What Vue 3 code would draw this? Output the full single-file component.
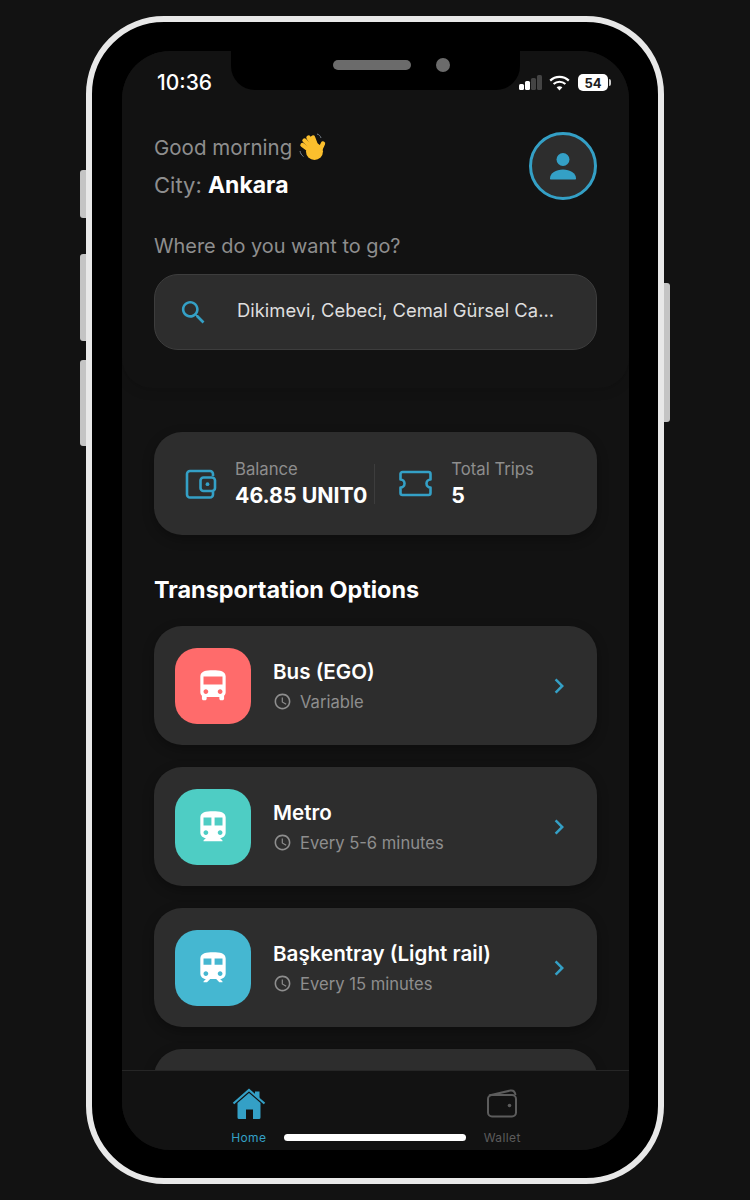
<script setup>
const rows = [
  { name: 'Bus (EGO)', time: 'Variable', color: '#ff6b6b', icon: 'bus' },
  { name: 'Metro', time: 'Every 5-6 minutes', color: '#4ecdc4', icon: 'metro' },
  { name: 'Başkentray (Light rail)', time: 'Every 15 minutes', color: '#45b7d1', icon: 'rail' },
]

const icons = {
  bus: 'M4 16c0 .88.39 1.67 1 2.22V20c0 .55.45 1 1 1h1c.55 0 1-.45 1-1v-1h8v1c0 .55.45 1 1 1h1c.55 0 1-.45 1-1v-1.78c.61-.55 1-1.34 1-2.22V6c0-3.5-3.58-4-8-4s-8 .5-8 4v10zm3.5 1c-.83 0-1.5-.67-1.5-1.5S6.67 14 7.5 14s1.5.67 1.5 1.5S8.33 17 7.5 17zm9 0c-.83 0-1.5-.67-1.5-1.5s.67-1.5 1.5-1.5 1.5.67 1.5 1.5-.67 1.5-1.5 1.5zm1.5-6H6V6h12v5z',
  metro: 'M12 2c-4.42 0-8 .5-8 4v9.5C4 17.43 5.57 19 7.5 19L6 20.5v.5h12v-.5L16.5 19c1.93 0 3.5-1.57 3.5-3.5V6c0-3.5-3.58-4-8-4zM7.5 17c-.83 0-1.5-.67-1.5-1.5S6.67 14 7.5 14s1.5.67 1.5 1.5S8.33 17 7.5 17zm3.5-6H6V6h5v5zm5.5 6c-.83 0-1.5-.67-1.5-1.5s.67-1.5 1.5-1.5 1.5.67 1.5 1.5-.67 1.5-1.5 1.5zm1.5-6h-5V6h5v5z',
  rail: 'M12 2c-4 0-8 .5-8 4v9.5C4 17.43 5.57 19 7.5 19L6 20.5v.5h2.23l2-2H14l2 2h2v-.5L16.5 19c1.93 0 3.5-1.57 3.5-3.5V6c0-3.5-3.58-4-8-4zM7.5 17c-.83 0-1.5-.67-1.5-1.5S6.67 14 7.5 14s1.5.67 1.5 1.5S8.33 17 7.5 17zm3.5-7H6V6h5v4zm2 0V6h5v4h-5zm3.5 7c-.83 0-1.5-.67-1.5-1.5s.67-1.5 1.5-1.5 1.5.67 1.5 1.5-.67 1.5-1.5 1.5z',
}
</script>

<template>
  <div class="page">
    <div class="phone">
      <span class="side side-l1"></span>
      <span class="side side-l2"></span>
      <span class="side side-l3"></span>
      <span class="side side-r"></span>

      <div class="screen">
        <div class="notch">
          <span class="speaker"></span>
          <span class="camera"></span>
        </div>

        <header class="header">
          <div class="status">
            <span class="time">10:36</span>
            <div class="status-icons">
              <svg width="23" height="15" viewBox="0 0 23 15">
                <rect x="0" y="9" width="5" height="6" rx="1.5" fill="#fff" />
                <rect x="6" y="6" width="5" height="9" rx="1.5" fill="#fff" />
                <rect x="12" y="3" width="5" height="12" rx="1.5" fill="#444" />
                <rect x="18" y="0" width="5" height="15" rx="1.5" fill="#444" />
              </svg>
              <svg width="21" height="16" viewBox="0 0 21 16" fill="none" stroke="#fff" stroke-width="2.2">
                <path d="M1.2 5.6C6.4.7 14.6.7 19.8 5.6" />
                <path d="M4.6 9c3.4-3 8.4-3 11.8 0" />
                <path d="M10.5 15.4 7.6 12.3c1.7-1.4 4.1-1.4 5.8 0z" fill="#fff" stroke="none" />
              </svg>
              <div class="battery"><span>54</span></div>
            </div>
          </div>

          <div class="greet-row">
            <div>
              <p class="greet">Good morning
                <svg class="wave" width="27" height="28" viewBox="0 0 27 28">
                  <g stroke="#fbbf2d" stroke-width="4.4" stroke-linecap="round" fill="none">
                    <path d="M13 19 3.5 12" />
                    <path d="M14 16 5.5 7.5" />
                    <path d="M16 15 9.5 4.5" />
                    <path d="M18 15 14 4.500" />
                    <path d="M20.5 18 24 10.5" />
                  </g>
                  <circle cx="15.5" cy="18.5" r="8.5" fill="#fbbf2d" />
                  <path d="M18 1c2 .5 3.5 2 4 4M1 18c.5 2.5 1.5 4 3.5 5.5" fill="none" stroke="#77818c" stroke-width="1" />
                </svg>
              </p>
              <p class="city">City: <strong>Ankara</strong></p>
            </div>
            <div class="avatar">
              <svg width="28" height="28" viewBox="0 0 28 28" fill="#34a0c6">
                <circle cx="14" cy="7.5" r="6.5" />
                <path d="M1 26.5c0-5.5 6-9 13-9s13 3.5 13 9c0 .6-.4 1-1 1H2c-.6 0-1-.4-1-1z" />
              </svg>
            </div>
          </div>

          <p class="question">Where do you want to go?</p>
          <div class="search">
            <svg width="31" height="31" viewBox="0 0 24 24" fill="#34a0c6">
              <path d="M15.5 14h-.79l-.28-.27C15.41 12.59 16 11.11 16 9.5 16 5.91 13.09 3 9.5 3S3 5.91 3 9.5 5.91 16 9.5 16c1.61 0 3.09-.59 4.23-1.57l.27.28v.79l5 4.99L20.49 19l-4.99-5zm-6 0C7.01 14 5 11.99 5 9.5S7.01 5 9.5 5 14 7.01 14 9.5 11.99 14 9.5 14z" />
            </svg>
            <span class="search-text">Dikimevi, Cebeci, Cemal Gürsel Ca...</span>
          </div>
        </header>

        <main class="content">
          <section class="stats">
            <div class="stat stat-balance">
              <svg width="32" height="32" viewBox="0 0 32 32" fill="none" stroke="#34a0c6" stroke-width="2.6" stroke-linejoin="round">
                <path d="M28 8V6a3 3 0 0 0-3-3H5a3 3 0 0 0-3 3v20.5a3 3 0 0 0 3 3h20a3 3 0 0 0 3-3v-3" />
                <rect x="15.5" y="9.5" width="14.5" height="13.5" rx="3" />
                <circle cx="22.5" cy="16.2" r="1.9" fill="#34a0c6" stroke="none" />
              </svg>
              <div>
                <div class="stat-label">Balance</div>
                <div class="stat-value">46.85 UNIT0</div>
              </div>
            </div>
            <span class="divider"></span>
            <div class="stat stat-trips">
              <svg width="33" height="27" viewBox="0 0 33 27" fill="none" stroke="#34a0c6" stroke-width="2.6" stroke-linejoin="round">
                <path d="M3.5 2h26a2 2 0 0 1 2 2v5.5a4 4 0 0 0 0 8V23a2 2 0 0 1-2 2h-26a2 2 0 0 1-2-2v-5.5a4 4 0 0 0 0-8V4a2 2 0 0 1 2-2z" />
              </svg>
              <div>
                <div class="stat-label">Total Trips</div>
                <div class="stat-value">5</div>
              </div>
            </div>
          </section>

          <h2 class="section-title">Transportation Options</h2>

          <div class="list">
            <div v-for="row in rows" :key="row.name" class="row">
              <div class="tile" :style="{ background: row.color }">
                <svg width="38" height="38" viewBox="0 0 24 24" fill="#fff"><path :d="icons[row.icon]" /></svg>
              </div>
              <div class="row-text">
                <div class="row-name">{{ row.name }}</div>
                <div class="row-time">
                  <svg width="19" height="19" viewBox="0 0 24 24" fill="#8e8e8e">
                    <path d="M11.99 2C6.47 2 2 6.48 2 12s4.47 10 9.99 10C17.52 22 22 17.52 22 12S17.52 2 11.99 2zM12 20c-4.42 0-8-3.58-8-8s3.58-8 8-8 8 3.58 8 8-3.58 8-8 8zm.5-13H11v6l5.25 3.15.75-1.23-4.5-2.67z" />
                  </svg>
                  <span>{{ row.time }}</span>
                </div>
              </div>
              <svg class="chevron" width="30" height="30" viewBox="0 0 24 24" fill="#34a0c6">
                <path d="M10 6 8.59 7.41 13.17 12l-4.58 4.59L10 18l6-6z" />
              </svg>
            </div>
            <div class="row row-empty"></div>
          </div>
        </main>

        <nav class="tabbar">
          <div class="tab tab-active">
            <svg width="34" height="32" viewBox="0 0 34 32">
              <path d="M23 3.5h4.5v8L23 7.5z" fill="#34a0c6" />
              <path d="M1.5 15.5 17 2l15.500 13.500" fill="none" stroke="#34a0c6" stroke-width="2.2" />
              <path d="M5.5 15 17 5l11.5 10v14.5a1.5 1.5 0 0 1-1.5 1.5h-6v-9.5h-7V31H7a1.5 1.5 0 0 1-1.5-1.500z" fill="#34a0c6" />
            </svg>
            <span>Home</span>
          </div>
          <div class="tab">
            <svg width="32" height="32" viewBox="0 0 32 32" fill="none" stroke="#5c5c5c" stroke-width="2">
              <rect x="2" y="7" width="28" height="21.5" rx="4" />
              <path d="M3 7.5 24.5 2.5c2.5-.4 4.5 1.500 5 4.500" />
              <circle cx="23.5" cy="17.5" r="1.8" fill="#5c5c5c" stroke="none" />
            </svg>
            <span>Wallet</span>
          </div>
        </nav>

        <span class="indicator"></span>
      </div>
    </div>
  </div>
</template>

<style>
html,
body {
  margin: 0;
  background: #121212;
}
</style>

<style scoped>
.page {
  height: 1200px;
  box-sizing: border-box;
  padding-top: 16px;
  display: flex;
  justify-content: center;
  background: #121212;
  font-family: Inter, 'Liberation Sans', sans-serif;
  overflow: hidden;
}

.phone {
  position: relative;
  width: 578px;
  height: 1168px;
  box-sizing: border-box;
  padding: 29px 29px 28px 30px;
  background: #000;
  border: 6px solid #e8e8e8;
  border-radius: 78px;
}

.side {
  position: absolute;
  width: 6px;
  background: #c4c4c4;
}

.side-l1 {
  left: -12px;
  top: 148px;
  height: 48px;
  border-radius: 3px 0 0 3px;
}

.side-l2 {
  left: -12px;
  top: 232px;
  height: 87px;
  border-radius: 3px 0 0 3px;
}

.side-l3 {
  left: -12px;
  top: 338px;
  height: 86px;
  border-radius: 3px 0 0 3px;
}

.side-r {
  right: -12px;
  top: 261px;
  height: 139px;
  border-radius: 0 3px 3px 0;
}

.screen {
  position: relative;
  height: 100%;
  display: flex;
  flex-direction: column;
  background: #121212;
  border-radius: 48px;
  overflow: hidden;
}

.notch {
  position: absolute;
  z-index: 3;
  left: 109px;
  top: 0;
  width: 289px;
  height: 39px;
  background: #000;
  border-radius: 0 0 24px 24px;
}

.speaker {
  position: absolute;
  left: 102px;
  top: 9px;
  width: 78px;
  height: 10px;
  background: #6b6b6b;
  border-radius: 5px;
}

.camera {
  position: absolute;
  left: 205px;
  top: 7px;
  width: 14px;
  height: 14px;
  background: #6b6b6b;
  border-radius: 50%;
}

.header {
  position: relative;
  z-index: 1;
  flex: none;
  padding: 0 32px 38px;
  background: #121212;
  border-radius: 0 0 30px 30px;
  box-shadow: 0 2px 12px rgba(0, 0, 0, 0.15);
}

.status {
  height: 44px;
  box-sizing: border-box;
  padding: 19px 0 0 3px;
  margin-right: -11px;
  display: flex;
  justify-content: space-between;
  align-items: center;
}

.time {
  color: #fff;
  font-size: 21px;
  font-weight: 500;
  line-height: 24px;
}

.status-icons {
  display: flex;
  align-items: center;
  gap: 7px;
}

.battery {
  position: relative;
  width: 30px;
  height: 17px;
  margin-left: 1px;
  background: #fff;
  border-radius: 5px;
  display: flex;
  justify-content: center;
  align-items: center;
  color: #1c1c1c;
  font-size: 13px;
  font-weight: 700;
}

.battery::after {
  content: '';
  position: absolute;
  right: -3px;
  top: 5px;
  width: 2px;
  height: 7px;
  background: #ccc;
  border-radius: 0 2px 2px 0;
}

.greet-row {
  margin-top: 33px;
  display: flex;
  justify-content: space-between;
  align-items: center;
}

.greet,
.city {
  margin: 0;
  height: 38px;
  display: flex;
  align-items: center;
  color: #8e8e8e;
  white-space: pre;
}

.greet {
  font-size: 20.5px;
}

.city {
  font-size: 22px;
}

.wave {
  margin-left: 1px;
}

.city strong {
  color: #fff;
  font-size: 23px;
  font-weight: 700;
}

.avatar {
  width: 68px;
  height: 68px;
  box-sizing: border-box;
  display: flex;
  justify-content: center;
  align-items: center;
  background: #2d2d2d;
  border: 3px solid #34a0c6;
  border-radius: 50%;
}

.question {
  margin: 28px 0 0;
  color: #8e8e8e;
  font-size: 19.9px;
  line-height: 28px;
}

.search {
  margin-top: 14px;
  height: 76px;
  box-sizing: border-box;
  padding: 0 23px;
  display: flex;
  align-items: center;
  gap: 28px;
  background: #2d2d2d;
  border: 1.5px solid #3d3d3d;
  border-radius: 24px;
}

.search-text {
  padding-bottom: 4px;
  color: #dedede;
  font-size: 18.4px;
  white-space: nowrap;
}

.content {
  flex: 1;
  min-height: 0;
  overflow: hidden;
  padding: 44px 32px 0;
}

.stats {
  height: 103px;
  display: flex;
  align-items: center;
  padding-left: 31px;
  background: #2d2d2d;
  border-radius: 28px;
  box-shadow: 0 4px 12px rgba(0, 0, 0, 0.3);
}

.stat {
  display: flex;
  align-items: center;
}

.stat-balance {
  gap: 18px;
}

.stat-trips {
  gap: 19px;
}

.stat-label {
  padding-top: 1px;
  color: #8e8e8e;
  font-size: 16.7px;
  line-height: 22px;
}

.stat-value {
  color: #fff;
  font-size: 21.3px;
  font-weight: 700;
  line-height: 30px;
  white-space: nowrap;
}

.divider {
  width: 1px;
  height: 40px;
  margin: 0 24px 0 7px;
  background: #3d3d3d;
}

.section-title {
  margin: 40px 0 21px;
  color: #fff;
  font-size: 23.4px;
  font-weight: 700;
  line-height: 30px;
}

.list {
  display: flex;
  flex-direction: column;
  gap: 22px;
}

.row {
  flex: none;
  height: 119px;
  box-sizing: border-box;
  padding: 0 21px;
  display: flex;
  align-items: center;
  gap: 22px;
  background: #2d2d2d;
  border-radius: 28px;
  box-shadow: 0 4px 12px rgba(0, 0, 0, 0.3);
}

.tile {
  flex: none;
  width: 76px;
  height: 76px;
  display: flex;
  justify-content: center;
  align-items: center;
  border-radius: 22px;
}

.row-text {
  flex: 1;
}

.row-name {
  color: #fff;
  font-size: 20.6px;
  font-weight: 600;
  line-height: 28px;
}

.row-time {
  margin-top: 4px;
  display: flex;
  align-items: center;
  gap: 8px;
  color: #8e8e8e;
  font-size: 16.6px;
  line-height: 24px;
}

.chevron {
  margin-right: 2px;
}

.tabbar {
  position: relative;
  z-index: 1;
  flex: none;
  height: 80px;
  box-sizing: border-box;
  display: grid;
  grid-template-columns: 1fr 1fr;
  background: #121212;
  border-top: 1px solid #262626;
}

.tab {
  display: flex;
  flex-direction: column;
  align-items: center;
  padding-top: 17px;
  color: #5c5c5c;
  font-size: 12px;
  letter-spacing: 0.4px;
}

.tab span {
  margin-top: 10px;
  line-height: 16px;
}

.tab-active {
  color: #34a0c6;
}

.indicator {
  position: absolute;
  z-index: 2;
  left: 162px;
  bottom: 9px;
  width: 182px;
  height: 7px;
  background: #fff;
  border-radius: 4px;
}
</style>
